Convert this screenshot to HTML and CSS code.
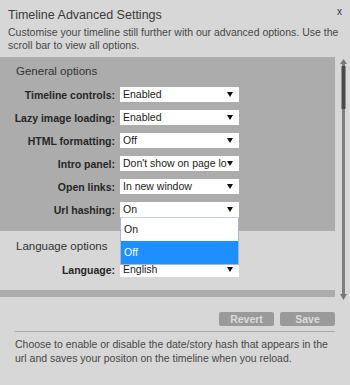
FILE: index.html
```html
<!DOCTYPE html>
<html lang="en">
<head>
    <meta charset="UTF-8">
    <title>Timeline Advanced Settings</title>
    <link rel="stylesheet" href="styles.css">
</head>
<body>
    <div class="header">
        <h1>Timeline Advanced Settings</h1>
        <span class="close">x</span>
        <p class="intro">Customise your timeline still further with our advanced options. Use the scroll bar to view all options.</p>
    </div>

    <div class="scroller">
        <div class="panel">
            <div class="section general">
                <h2>General options</h2>
                <div class="row">
                    <label>Timeline controls:</label>
                    <div class="select">Enabled</div>
                </div>
                <div class="row">
                    <label>Lazy image loading:</label>
                    <div class="select">Enabled</div>
                </div>
                <div class="row">
                    <label>HTML formatting:</label>
                    <div class="select">Off</div>
                </div>
                <div class="row">
                    <label>Intro panel:</label>
                    <div class="select">Don't show on page lo</div>
                </div>
                <div class="row">
                    <label>Open links:</label>
                    <div class="select">In new window</div>
                </div>
                <div class="row">
                    <label>Url hashing:</label>
                    <div class="select open">
                        On
                        <ul class="dropdown">
                            <li>On</li>
                            <li class="active">Off</li>
                        </ul>
                    </div>
                </div>
            </div>
            <div class="section language">
                <h2>Language options</h2>
                <div class="row">
                    <label>Language:</label>
                    <div class="select">English</div>
                </div>
            </div>
            <div class="section next"></div>
        </div>
        <div class="scrollbar">
            <svg width="9" height="243" viewBox="0 0 9 243">
                <path d="M4.5 1 L8 6 L1 6 Z" fill="#777"/>
                <rect x="3" y="5" width="3" height="231" fill="#7d7d7d"/>
                <rect x="2.5" y="8" width="4" height="43" fill="#4a4a4a"/>
                <path d="M1 236 L8 236 L4.5 242 Z" fill="#777"/>
            </svg>
        </div>
    </div>

    <div class="actions">
        <button class="button">Revert</button>
        <button class="button">Save</button>
    </div>

    <p class="help">Choose to enable or disable the date/story hash that appears in the url and saves your positon on the timeline when you reload.</p>
</body>
</html>
```

FILE: styles.css
```css
* {
    margin: 0;
    padding: 0;
    box-sizing: border-box;
}

body {
    font-family: "Liberation Sans", Arial, sans-serif;
    background: #d7d7d7;
    color: #444;
    width: 350px;
    height: 385px;
    overflow: hidden;
}

.header {
    position: relative;
    padding: 7px 10px 0 8px;
}

h1 {
    font-size: 12.5px;
    font-weight: normal;
    color: #3a3a3a;
    line-height: 17px;
}

.close {
    position: absolute;
    top: 6px;
    right: 8px;
    font-size: 10px;
    color: #333;
}

.intro {
    font-size: 10.5px;
    line-height: 13px;
    margin-top: 2px;
    color: #474747;
}

.scroller {
    display: flex;
    margin-top: 5px;
    height: 243px;
}

.panel {
    width: 335px;
    overflow: hidden;
}

.section h2 {
    font-size: 11.5px;
    font-weight: normal;
    color: #333;
    padding-left: 16px;
    line-height: 16px;
}

.general {
    background: #acacac;
    padding: 6px 0 14px;
}

.general h2 {
    margin-bottom: 8px;
}

.language {
    height: 59px;
    padding-top: 7px;
}

.language h2 {
    margin-bottom: 8px;
}

.next {
    height: 7px;
    background: #acacac;
}

.row {
    display: flex;
    align-items: center;
    height: 15px;
    margin-bottom: 8px;
}

.row:last-child {
    margin-bottom: 0;
}

.row label {
    width: 120px;
    padding-right: 5px;
    text-align: right;
    font-size: 10.5px;
    font-weight: bold;
    color: #262626;
    white-space: nowrap;
}

.select {
    position: relative;
    width: 119px;
    height: 15px;
    background: #fff;
    font-size: 10.5px;
    line-height: 15px;
    color: #222;
    padding-left: 3px;
    white-space: nowrap;
}

.select::after {
    content: "";
    position: absolute;
    right: 6px;
    top: 5px;
    border-left: 3px solid transparent;
    border-right: 3px solid transparent;
    border-top: 5px solid #111;
}

.select:not(.open) {
    overflow: hidden;
    padding-right: 16px;
}

.select.open {
    z-index: 2;
}

.dropdown {
    position: absolute;
    top: 15px;
    left: 0;
    width: 119px;
    list-style: none;
    background: #fff;
    border: 1px solid #a7b7d0;
    border-top-color: #c5d2e6;
}

.dropdown li {
    height: 23px;
    line-height: 22px;
    padding-left: 3px;
}

.dropdown li.active {
    background: #1e8fff;
    color: #fff;
}

.scrollbar {
    margin-left: 4px;
    padding-top: 1px;
}

.scrollbar svg {
    display: block;
}

.actions {
    display: flex;
    justify-content: flex-end;
    gap: 6px;
    padding: 12px 15px 0 0;
}

.button {
    width: 55px;
    height: 14px;
    border: none;
    border-radius: 2px;
    background: #9a9a9a;
    color: #dcdcdc;
    font-family: "Liberation Sans", Arial, sans-serif;
    font-size: 10.5px;
    font-weight: bold;
    line-height: 14px;
}

.help {
    margin: 5px 15px 0;
    padding-top: 5px;
    border-top: 1px solid #a9a9a9;
    font-size: 10.5px;
    line-height: 14px;
    color: #474747;
}
```
